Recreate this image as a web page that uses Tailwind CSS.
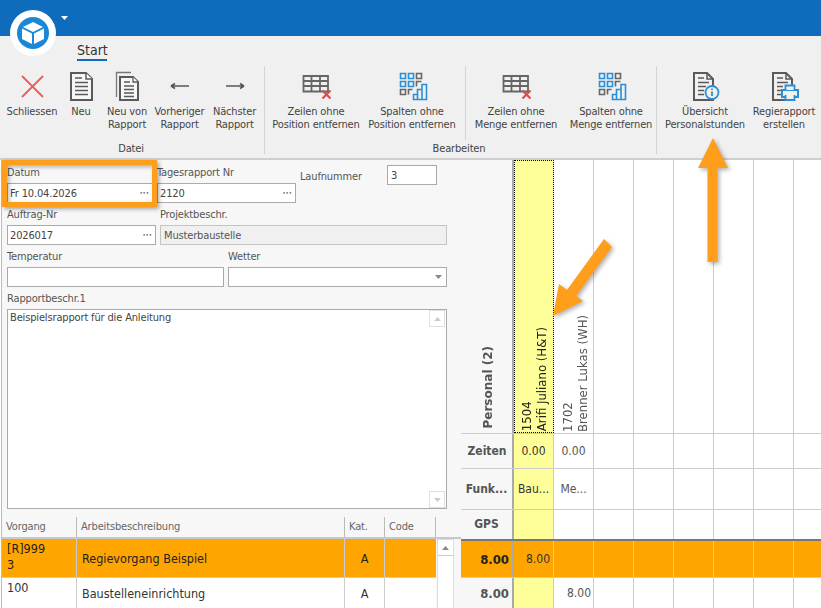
<!DOCTYPE html>
<html lang="en">
<head>
  <meta charset="UTF-8" />
  <title>Rapport</title>
  <script src="https://cdn.jsdelivr.net/npm/@tailwindcss/browser@4"></script>
</head>
<body class="bg-white">
<div class="relative w-[821px] h-[608px] overflow-hidden text-[11px] leading-[13px] tracking-[-0.15px] text-[#444] font-['DejaVu_Sans_Condensed','DejaVu_Sans',sans-serif]">

  <!-- Title bar -->
  <div class="h-[36px] bg-[#0f6cbd]"></div>

  <!-- Logo -->
  <svg class="absolute left-[10px] top-[10px]" width="46" height="46" viewBox="0 0 46 46">
    <circle cx="23" cy="23" r="23" fill="#fff"/>
    <circle cx="23" cy="23" r="16" fill="#1a87d8"/>
    <path d="M23 12 L33 17 L23 22 L13 17 Z" fill="#fff"/>
    <path d="M12 18.500 L22 23.500 L22 34 L12 29 Z" fill="#fff"/>
    <path d="M34 18.500 L24 23.500 L24 34 L34 29 Z" fill="#fff"/>
  </svg>
  <svg class="absolute left-[61px] top-[16px]" width="7" height="4" viewBox="0 0 7 4"><path d="M0 0H7L3.500 4Z" fill="#fff"/></svg>

  <!-- Ribbon -->
  <div class="h-[124px] bg-[#f0f0f0] border-b-2 border-[#cfcfcf]">
    <div class="h-[30px] pl-[77px] pt-[6px]">
      <div class="inline-block text-[14px] leading-[16px] tracking-normal text-[#333] border-b-2 border-[#0f6cbd] pb-[1px] w-[30px]">Start</div>
    </div>

    <div class="flex h-[92px]">
      <!-- Datei -->
      <div class="w-[265px] border-r border-[#d4d4d4] h-[88px] relative pl-[4px] flex">
        <div class="w-[56px] text-center pt-[4px]">
          <svg class="mx-auto" width="32" height="32" viewBox="0 0 32 32"><path d="M6 6 L27 27 M27 6 L6 27" stroke="#ee5a5a" stroke-width="1.800" fill="none"/></svg>
          <div class="mt-[3px]">Schliessen</div>
        </div>
        <div class="w-[42px] text-center pt-[4px]">
          <svg class="mx-auto" width="32" height="32" viewBox="0 0 32 32"><path d="M6 3 H21 L27 9 V30 H6 Z" fill="#f7f7f7" stroke="#5a5a5a" stroke-width="2"/><path d="M21 3 V9 H27" fill="#fff" stroke="#5a5a5a" stroke-width="1.500"/><path d="M10 8H17M10 12.500H23M10 16.500H23M10 20.500H23M10 24.500H23" stroke="#5a5a5a" stroke-width="1.500"/></svg>
          <div class="mt-[3px]">Neu</div>
        </div>
        <div class="w-[50px] text-center pt-[4px]">
          <svg class="mx-auto" width="32" height="32" viewBox="0 0 32 32"><path d="M5.500 27 V2.500 H20" fill="none" stroke="#777" stroke-width="1.300"/><path d="M9 7 H22 L27 12 V30 H9 Z" fill="#f7f7f7" stroke="#5a5a5a" stroke-width="2"/><path d="M22 7 V12 H27" fill="#fff" stroke="#5a5a5a" stroke-width="1.300"/><path d="M13 12H19M13 16H23M13 19.500H23M13 23H23M13 26.500H23" stroke="#5a5a5a" stroke-width="1.400"/></svg>
          <div class="mt-[3px]">Neu von<br>Rapport</div>
        </div>
        <div class="w-[55px] text-center pt-[4px]">
          <svg class="mx-auto" width="32" height="32" viewBox="0 0 32 32"><path d="M7 16 H25 M7 16 L11 13.500 M7 16 L11 18.500" stroke="#555" stroke-width="1.500" fill="none"/></svg>
          <div class="mt-[3px]">Vorheriger<br>Rapport</div>
        </div>
        <div class="w-[55px] text-center pt-[4px]">
          <svg class="mx-auto" width="32" height="32" viewBox="0 0 32 32"><path d="M7 16 H25 M25 16 L21 13.500 M25 16 L21 18.500" stroke="#555" stroke-width="1.500" fill="none"/></svg>
          <div class="mt-[3px]">Nächster<br>Rapport</div>
        </div>
        <div class="absolute left-0 right-0 top-[76px] text-center pr-[2px]">Datei</div>
      </div>

      <!-- Bearbeiten (spans two icon sets) -->
      <div class="w-[392px] border-r border-[#d4d4d4] h-[88px] relative flex">
        <div class="w-[96px] ml-[3px] text-center pt-[4px]">
          <svg class="mx-auto" width="32" height="32" viewBox="0 0 32 32"><path d="M3.500 6H28V21.500H3.500Z M3.500 11H28M3.500 16H28M11.500 6V21.500M20 6V21.500" fill="none" stroke="#666" stroke-width="1.800"/><path d="M22.500 20.500 L30.500 28.500 M30.500 20.500 L22.500 28.500" stroke="#f04545" stroke-width="2.200"/></svg>
          <div class="mt-[3px] whitespace-nowrap">Zeilen ohne<br>Position entfernen</div>
        </div>
        <div class="w-[96px] text-center pt-[4px]">
          <svg class="mx-auto" width="32" height="32" viewBox="0 0 32 32"><g fill="none" stroke-width="1.600"><path d="M4.500 3.500h5v5h-5zM12.500 3.500h5v5h-5zM4.500 11.500h5v5h-5zM12.500 11.500h5v5h-5z" stroke="#2b8fd8"/><path d="M20.500 3.500h5v5h-5zM4.500 19.500h5v5h-5zM20.500 16.500v-5h5M12.500 24.500v-5h4" stroke="#666"/><path d="M17.500 24.500h4v5h-4zM21.500 19.500h4.500v10h-4.500zM26 14.500h4.500v15H26z" stroke="#2b8fd8"/></g></svg>
          <div class="mt-[3px] whitespace-nowrap">Spalten ohne<br>Position entfernen</div>
        </div>
        <div class="w-px h-[74px] bg-[#d4d4d4] ml-[5px]"></div>
        <div class="w-[92px] ml-[4px] text-center pt-[4px]">
          <svg class="mx-auto" width="32" height="32" viewBox="0 0 32 32"><path d="M3.500 6H28V21.500H3.500Z M3.500 11H28M3.500 16H28M11.500 6V21.500M20 6V21.500" fill="none" stroke="#666" stroke-width="1.800"/><path d="M22.500 20.500 L30.500 28.500 M30.500 20.500 L22.500 28.500" stroke="#f04545" stroke-width="2.200"/></svg>
          <div class="mt-[3px] whitespace-nowrap">Zeilen ohne<br>Menge entfernen</div>
        </div>
        <div class="w-[88px] ml-[5px] text-center pt-[4px]">
          <svg class="mx-auto" width="32" height="32" viewBox="0 0 32 32"><g fill="none" stroke-width="1.600"><path d="M4.500 3.500h5v5h-5zM12.500 3.500h5v5h-5zM4.500 11.500h5v5h-5zM12.500 11.500h5v5h-5z" stroke="#2b8fd8"/><path d="M20.500 3.500h5v5h-5zM4.500 19.500h5v5h-5zM20.500 16.500v-5h5M12.500 24.500v-5h4" stroke="#666"/><path d="M17.500 24.500h4v5h-4zM21.500 19.500h4.500v10h-4.500zM26 14.500h4.500v15H26z" stroke="#2b8fd8"/></g></svg>
          <div class="mt-[3px] whitespace-nowrap">Spalten ohne<br>Menge entfernen</div>
        </div>
        <div class="absolute left-0 right-0 top-[76px] text-center pr-[3px]">Bearbeiten</div>
      </div>

      <!-- Auswertung -->
      <div class="flex-1 flex pl-[6px]">
        <div class="w-[84px] text-center pt-[4px]">
          <svg class="mx-auto" width="32" height="32" viewBox="0 0 32 32"><path d="M5 3 H18 L24 9 V30 H5 Z" fill="none" stroke="#5a5a5a" stroke-width="2"/><path d="M18 3 V9 H24" fill="none" stroke="#5a5a5a" stroke-width="1.500"/><path d="M9 8H15M9 12.500H20M9 16.500H17M9 20.500H15M9 24.500H15" stroke="#5a5a5a" stroke-width="1.500"/><circle cx="23" cy="22.500" r="6.500" fill="#f0f0f0" stroke="#2b8fd8" stroke-width="1.800"/><path d="M23 21.500V26M23 18.500V20" stroke="#2b8fd8" stroke-width="1.800"/></svg>
          <div class="mt-[3px] whitespace-nowrap">Übersicht<br>Personalstunden</div>
        </div>
        <div class="w-[74px] text-center pt-[4px]">
          <svg class="mx-auto" width="32" height="32" viewBox="0 0 32 32"><path d="M5 3 H18 L24 9 V30 H5 Z" fill="none" stroke="#5a5a5a" stroke-width="2"/><path d="M18 3 V9 H24" fill="none" stroke="#5a5a5a" stroke-width="1.500"/><path d="M9 8H15M9 12.500H20M9 16.500H15M9 20.500H13M9 24.500H13" stroke="#5a5a5a" stroke-width="1.500"/><path d="M14 20 H30 V27 H14 Z" fill="#f0f0f0" stroke="#2b8fd8" stroke-width="2"/><path d="M17.500 20V15.500H26.500V20M17.500 25V30H26.500V25" fill="#f0f0f0" stroke="#2b8fd8" stroke-width="1.800"/></svg>
          <div class="mt-[3px] whitespace-nowrap">Regierapport<br>erstellen</div>
        </div>
      </div>
    </div>
  </div>

  <div class="flex h-[448px]">
    <!-- Form panel -->
    <div class="w-[460px] shrink-0 bg-[#f7f7f7] border-l border-[#bbb] ml-px text-[#555] relative">
      <div class="flex pl-[5px] pt-[4px] h-[43px]">
        <div class="w-[150px]">
          <div class="h-[19px] leading-[17px]">Datum</div>
          <div class="h-[20px] w-[146px] bg-white border border-[#aaa] flex justify-between items-center pl-[2px] pr-[3px] text-[#444]"><span>Fr 10.04.2026</span><span class="text-[6px] leading-[6px] tracking-normal text-[#666]">•••</span></div>
        </div>
        <div class="w-[143px]">
          <div class="h-[19px] leading-[17px]">Tagesrapport Nr</div>
          <div class="h-[20px] w-[139px] bg-white border border-[#aaa] flex justify-between items-center pl-[2px] pr-[3px] text-[#444]"><span>2120</span><span class="text-[6px] leading-[6px] tracking-normal text-[#666]">•••</span></div>
        </div>
        <div class="w-[87px] pt-[4px] leading-[17px]">Laufnummer</div>
        <div class="w-[50px] h-[20px] mt-px bg-white border border-[#aaa] flex items-center px-[3px] text-[#444]">3</div>
      </div>
      <div class="flex pl-[5px] pt-[3px] h-[42px]">
        <div class="w-[153px]">
          <div class="h-[19px] leading-[17px]">Auftrag-Nr</div>
          <div class="h-[20px] w-[149px] bg-white border border-[#aaa] flex justify-between items-center pl-[2px] pr-[3px] text-[#444]"><span>2026017</span><span class="text-[6px] leading-[6px] tracking-normal text-[#666]">•••</span></div>
        </div>
        <div class="w-[287px]">
          <div class="h-[19px] leading-[17px]">Projektbeschr.</div>
          <div class="h-[20px] bg-[#f0f0f0] border border-[#c4c4c4] flex items-center px-[3px]">Musterbaustelle</div>
        </div>
      </div>
      <div class="flex pl-[5px] pt-[3px] h-[42px]">
        <div class="w-[221px]">
          <div class="h-[19px] leading-[17px]">Temperatur</div>
          <div class="h-[20px] w-[217px] bg-white border border-[#aaa]"></div>
        </div>
        <div class="w-[219px]">
          <div class="h-[19px] leading-[17px]">Wetter</div>
          <div class="h-[20px] bg-white border border-[#aaa] flex justify-end items-center pr-[4px]"><svg width="7" height="4" viewBox="0 0 7 4"><path d="M0 0H7L3.500 4Z" fill="#888"/></svg></div>
        </div>
      </div>
      <div class="pl-[5px] pt-[3px]">
        <div class="h-[19px] leading-[17px]">Rapportbeschr.1</div>
        <div class="h-[200px] w-[440px] bg-white border border-[#aaa] flex justify-between text-[#444]">
          <div class="pl-[2px] pt-[1px]">Beispielsrapport für die Anleitung</div>
          <div class="w-[16px] mr-px flex flex-col justify-between">
            <div class="h-[17px] border border-[#e0e0e0] flex items-center justify-center"><svg width="7" height="4" viewBox="0 0 7 4"><path d="M0 4H7L3.500 0Z" fill="#ccc"/></svg></div>
            <div class="h-[17px] border border-[#e0e0e0] flex items-center justify-center"><svg width="7" height="4" viewBox="0 0 7 4"><path d="M0 0H7L3.500 4Z" fill="#ccc"/></svg></div>
          </div>
        </div>
      </div>
      <!-- Table -->
      <div class="mt-[8px] flex h-[22px] items-center text-[#666] border-b-2 border-[#c8c8c8]">
        <div class="w-[75px] pl-[4px] h-[20px] leading-[20px] border-r border-[#bbb]">Vorgang</div>
        <div class="w-[268px] pl-[4px] h-[20px] leading-[20px] border-r border-[#bbb]">Arbeitsbeschreibung</div>
        <div class="w-[40px] pl-[4px] h-[20px] leading-[20px] border-r border-[#bbb]">Kat.</div>
        <div class="w-[51px] pl-[4px] h-[20px] leading-[20px] border-r border-[#bbb]">Code</div>
      </div>
      <div class="flex text-[12.500px] tracking-normal">
        <div class="w-[434px] text-[#333]">
          <div class="flex h-[39px] bg-[#ffa500] border-b border-[#ccc] text-[#222]">
            <div class="w-[75px] pl-[5px] pt-[2px] leading-[16px] border-r border-[#ccc] break-all">[R]999<br>3</div>
            <div class="w-[268px] pl-[5px] flex items-center border-r border-[#ccc]">Regievorgang Beispiel</div>
            <div class="w-[40px] flex items-center justify-center border-r border-[#ccc]">A</div>
            <div class="flex-1"></div>
          </div>
          <div class="flex h-[40px] bg-white">
            <div class="w-[75px] pl-[5px] pt-[2px] leading-[16px] border-r border-[#ccc]">100</div>
            <div class="w-[268px] pl-[5px] pt-[9px] border-r border-[#ccc]">Baustelleneinrichtung</div>
            <div class="w-[40px] pt-[9px] text-center border-r border-[#ccc]">A</div>
            <div class="flex-1"></div>
          </div>
        </div>
        <div class="w-[17px] ml-px h-[80px] bg-white border border-[#ddd]">
          <div class="h-[16px] border-b border-[#ccc] flex items-center justify-center"><svg width="7" height="4" viewBox="0 0 7 4"><path d="M0 4H7L3.500 0Z" fill="#888"/></svg></div>
        </div>
      </div>
    </div>

    <!-- Personal grid -->
    <div class="flex-1 min-w-0 overflow-hidden">
      <div id="grid" class="w-[380px] text-[#555] tracking-normal">
        <div class="flex h-[274px] border-b border-[#ccc]" data-fill>
          <div class="w-[53px] shrink-0 bg-[#f7f7f7] border-r-2 border-[#aaa] flex justify-center items-end pb-[5px] pl-[4px]"><span class="[writing-mode:vertical-rl] rotate-180 font-bold text-[12px] leading-[15px] font-['DejaVu_Sans',sans-serif] text-[#555]">Personal (2)</span></div>
          <div class="w-[40px] shrink-0 bg-[#ffff99] border border-dotted border-black text-[#222] flex justify-start items-end pb-px"><span class="[writing-mode:vertical-rl] rotate-180 whitespace-pre text-[13px] leading-[15px] pr-[4px]">1504
Arifi Juliano (H&amp;T)</span></div>
          <div class="w-[40px] shrink-0 bg-white border-r border-[#ccc] flex items-end pb-px"><span class="[writing-mode:vertical-rl] rotate-180 whitespace-pre text-[13px] leading-[15px] pr-[6px]">1702
Brenner Lukas (WH)</span></div>
        </div>
        <div class="flex h-[35px] border-b border-[#ccc]" data-fill>
          <div class="w-[53px] shrink-0 bg-[#f7f7f7] border-r-2 border-[#aaa] flex justify-center items-center font-bold text-[12px] pl-px">Zeiten</div>
          <div class="w-[40px] shrink-0 bg-[#ffff99] border-r border-[#ccc] flex justify-center items-center text-[12px] text-[#333]">0.00</div>
          <div class="w-[40px] shrink-0 bg-white border-r border-[#ccc] flex justify-center items-center text-[12px]">0.00</div>
        </div>
        <div class="flex h-[41px] border-b border-[#ccc]" data-fill>
          <div class="w-[53px] shrink-0 bg-[#f7f7f7] border-r-2 border-[#aaa] flex justify-center items-center font-bold text-[12px]">Funk...</div>
          <div class="w-[40px] shrink-0 bg-[#ffff99] border-r border-[#ccc] flex justify-center items-center text-[#333] text-[12px]">Bau...</div>
          <div class="w-[40px] shrink-0 bg-white border-r border-[#ccc] flex justify-center items-center text-[12px]">Me...</div>
        </div>
        <div class="flex h-[29px]" data-fill>
          <div class="w-[53px] shrink-0 bg-[#f7f7f7] border-r-2 border-[#aaa] flex justify-center items-center font-bold text-[12px]">GPS</div>
          <div class="w-[40px] shrink-0 bg-[#ffff99] border-r border-[#ccc]"></div>
          <div class="w-[40px] shrink-0 bg-white border-r border-[#ccc]"></div>
        </div>
        <div class="flex h-[39px] border-t-2 border-b border-t-[#777] border-b-[#ccc] bg-[#ffa500]" data-fill="orange">
          <div class="w-[53px] shrink-0 border-r-2 border-[#aaa] flex justify-end items-center font-bold text-[13px] text-[#222] pr-[3px]">8.00</div>
          <div class="w-[40px] shrink-0 border-r border-[#ccc] flex justify-end items-center text-[12px] text-[#333] pr-[3px]">8.00</div>
          <div class="w-[40px] shrink-0 border-r border-[#ccc]"></div>
        </div>
        <div class="flex h-[31px]" data-fill>
          <div class="w-[53px] shrink-0 bg-[#f7f7f7] border-r-2 border-[#aaa] flex justify-end items-center font-bold text-[13px] pr-[3px]">8.00</div>
          <div class="w-[40px] shrink-0 bg-[#ffff99] border-r border-[#ccc]"></div>
          <div class="w-[40px] shrink-0 bg-white border-r border-[#ccc] flex justify-end items-center text-[12px] pr-[2px]">8.00</div>
        </div>
      </div>
    </div>
  </div>

  <!-- Annotation: highlight box and arrows -->
  <div class="absolute left-[2px] top-[160px] w-[155px] h-[47px] border-[5px] border-[#ff9e1b] shadow-[2px_2px_4px_rgba(0,0,0,0.35),inset_2px_2px_4px_rgba(0,0,0,0.3)]"></div>
  <svg class="absolute left-0 top-0 pointer-events-none drop-shadow-[2px_2px_2px_rgba(0,0,0,0.3)]" width="821" height="608" viewBox="0 0 821 608">
    <path d="M713 138 L728 168 L717.500 168 L717.500 262 L707.500 262 L707.500 168 L698 168 Z" fill="#ff9e1b"/>
    <path d="M553 316 L559 284 L567 290 L604 239 L612 247 L576 296 L583 301 Z" fill="#ff9e1b"/>
  </svg>
</div>

<script>
  // empty day columns to the right of the two people
  document.querySelectorAll("[data-fill]").forEach(row => {
    for (let i = 0; i < 7; i++) {
      const cell = document.createElement("div");
      cell.className = row.dataset.fill === "orange" ? "w-[40px] shrink-0 border-r border-[#ccc]" : "w-[40px] shrink-0 bg-white border-r border-[#ccc]";
      row.appendChild(cell);
    }
  });
</script>
</body>
</html>
